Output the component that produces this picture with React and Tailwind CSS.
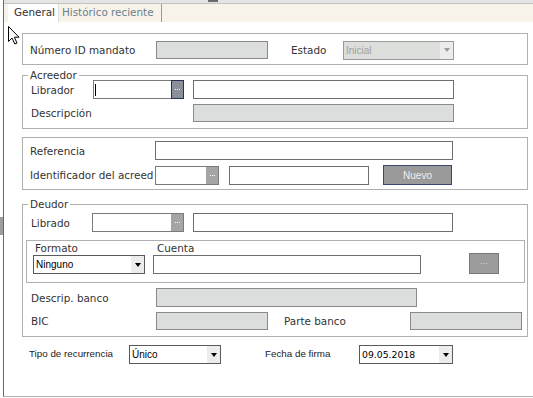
import React from "react";

const Label = ({ className = "", children }) => (
  <span
    className={`shrink-0 overflow-hidden whitespace-nowrap text-[10.4px] leading-[18px] text-[#333] ${className}`}
  >
    {children}
  </span>
);

const TextBox = ({ className = "", children }) => (
  <div className={`h-[19px] shrink-0 border border-[#6e6e6e] bg-white ${className}`}>
    {children}
  </div>
);

const ReadOnly = ({ className = "" }) => (
  <div className={`h-[18px] shrink-0 border border-[#8a8a8a] bg-[#dcdedd] ${className}`} />
);

const Dots = () => (
  <div className="flex gap-[1px]">
    <span className="h-[1px] w-[1px] bg-white" />
    <span className="h-[1px] w-[1px] bg-white" />
    <span className="h-[1px] w-[1px] bg-white" />
  </div>
);

const Lookup = ({ className = "", active = false }) => (
  <div className={`flex h-[19px] shrink-0 border border-[#7a7a7a] bg-white ${className}`}>
    <div className="flex flex-1 items-center pl-[1px]">
      {active && <span className="h-[12px] w-[1px] bg-black" />}
    </div>
    {active ? (
      <div className="-my-px -mr-px flex w-[13px] items-center justify-center border border-[#243458] bg-[#8a8f99]">
        <Dots />
      </div>
    ) : (
      <div className="flex w-[12px] items-center justify-center bg-[#a5a5a5]">
        <Dots />
      </div>
    )}
  </div>
);

const Arrow = ({ muted = false }) => (
  <div className="flex h-full w-[13px] items-center justify-center bg-[#ececec]">
    <div
      className={`h-0 w-0 border-x-[3.5px] border-t-[4px] border-x-transparent ${
        muted ? "border-t-[#9a9a9a]" : "border-t-black"
      }`}
    />
  </div>
);

const Select = ({ className = "", value, muted = false, mono = false }) => (
  <div
    className={`flex h-[19px] shrink-0 items-center border ${
      muted ? "border-[#9a9a9a] bg-[#dcdedc]" : "border-[#5a5a5a] bg-white"
    } ${className}`}
  >
    <span
      className={`flex-1 pl-[2px] leading-[17px] ${
        mono
          ? "font-['DejaVu_Sans',sans-serif] text-[9.3px] text-black"
          : muted
          ? "font-['Liberation_Sans',Arial,sans-serif] text-[10px] text-[#a0a0a0]"
          : "font-['Liberation_Sans',Arial,sans-serif] text-[10px] text-black"
      }`}
    >
      {value}
    </span>
    <Arrow muted={muted} />
  </div>
);

const Group = ({ title, className = "", children }) => (
  <div className={`relative border border-[#b0b0b0] ${className}`}>
    <span className="absolute -top-[8px] left-[5px] bg-white px-[2px] text-[10.4px] leading-[14px] text-[#333]">
      {title}
    </span>
    {children}
  </div>
);

export default function App() {
  return (
    <div className="flex h-[398px] w-[533px] overflow-hidden bg-white font-['DejaVu_Sans',sans-serif]">
      <div className="flex w-[3px] shrink-0 flex-col">
        <div className="h-[217px]" />
        <div className="h-[18px] bg-[#9c9c9c]" />
      </div>

      <div className="flex h-[397px] flex-1 flex-col border-b border-l border-[#b0b0b0] border-l-[#5d6986]">
        <div className="flex h-[4px] shrink-0 border-b border-[#c4c4c4] bg-[#e4e4e4]">
          <div className="ml-[204px] h-[2px] w-[10px] bg-[#6a6a6a]" />
        </div>

        <div className="flex h-[18px] shrink-0 items-stretch bg-[#f7f3e9] pl-[4px]">
          <div className="flex w-[51px] items-center border-r border-[#dcdcdc] bg-white pl-[6px] text-[10.4px] text-[#333]">
            General
          </div>
          <div className="flex w-[103px] items-center border-r border-[#9a9a9a] pl-[3px] text-[10.4px] text-[#6d7d8d]">
            Histórico reciente
          </div>
        </div>

        <div className="flex flex-col pl-[18px] pr-[5px]">
          {/* id + estado */}
          <div className="mt-[11px] flex h-[32px] items-start border border-[#b0b0b0] pl-[7px] pt-[7px]">
            <div className="flex h-[18px] items-center">
              <Label className="w-[126px]">Número ID mandato</Label>
              <ReadOnly className="w-[112px]" />
              <Label className="ml-[23px] w-[52px]">Estado</Label>
              <Select className="h-[18px] w-[111px]" value="Inicial" muted />
            </div>
          </div>

          {/* acreedor */}
          <Group title="Acreedor" className="mt-[10px] pb-[6px] pl-[8px] pt-[4px]">
            <div className="flex items-center">
              <Label className="w-[62px]">Librador</Label>
              <Lookup className="w-[91px]" active />
              <TextBox className="ml-[9px] w-[261px]" />
            </div>
            <div className="mt-[5px] flex items-center">
              <Label className="w-[162px]">Descripción</Label>
              <ReadOnly className="w-[261px]" />
            </div>
          </Group>

          {/* referencia */}
          <div className="mt-[8px] border border-[#b0b0b0] pb-[4px] pl-[7px] pt-[3px]">
            <div className="flex items-center">
              <Label className="w-[125px]">Referencia</Label>
              <TextBox className="h-[18px] w-[298px]" />
            </div>
            <div className="mt-[5px] flex items-center">
              <Label className="w-[125px]">Identificador del acreed</Label>
              <Lookup className="w-[64px]" />
              <TextBox className="ml-[10px] w-[140px]" />
              <button className="ml-[14px] h-[20px] w-[69px] border border-[#3c4670] bg-[#9a9a9a] font-['Liberation_Sans',Arial,sans-serif] text-[10px] text-[#eeeeee]">
                Nuevo
              </button>
            </div>
          </div>

          {/* deudor */}
          <Group title="Deudor" className="mt-[14px] pb-[6px] pl-[8px] pt-[8px]">
            <div className="flex items-center">
              <Label className="w-[61px]">Librado</Label>
              <Lookup className="h-[18px] w-[92px]" />
              <TextBox className="ml-[9px] h-[18px] w-[260px]" />
            </div>

            <div className="-ml-[5px] mr-[2px] mt-[8px] flex items-end border border-[#b0b0b0] pb-[8px] pl-[6px] pt-[1px]">
              <div className="flex w-[112px] flex-col">
                <span className="pl-[2px] text-[10.4px] leading-[13px] text-[#333]">Formato</span>
                <Select className="w-[112px]" value="Ninguno" />
              </div>
              <div className="ml-[8px] flex flex-col">
                <span className="pl-[4px] text-[10.4px] leading-[13px] text-[#333]">Cuenta</span>
                <TextBox className="w-[268px]" />
              </div>
              <button className="ml-[48px] flex h-[21px] w-[30px] items-center justify-center border border-[#7a7a7a] bg-[#9c9c9c] pb-[3px] font-['Liberation_Sans',Arial,sans-serif] text-[9px] text-[#d8d8d8]">
                ...
              </button>
            </div>

            <div className="mt-[5px] flex items-center">
              <Label className="w-[125px]">Descrip. banco</Label>
              <ReadOnly className="h-[19px] w-[261px]" />
            </div>
            <div className="mt-[5px] flex items-center">
              <Label className="w-[125px]">BIC</Label>
              <ReadOnly className="w-[112px]" />
              <Label className="ml-[16px] w-[126px]">Parte banco</Label>
              <ReadOnly className="w-[112px]" />
            </div>
          </Group>

          {/* recurrencia + fecha */}
          <div className="mt-[8px] flex items-center pl-[7px] font-['Liberation_Sans',Arial,sans-serif] text-[9.8px] text-[#222]">
            <span className="w-[100px]">Tipo de recurrencia</span>
            <Select className="w-[92px]" value="Único" />
            <span className="ml-[44px] w-[94px]">Fecha de firma</span>
            <Select className="w-[94px]" value="09.05.2018" mono />
          </div>
        </div>
      </div>

      <svg
        className="absolute left-[8px] top-[26px]"
        width="13"
        height="19"
        viewBox="0 0 13 19"
      >
        <path
          d="M0.5 0.5 L0.5 15.5 L4 12 L6.8 18 L9 17 L6.3 11.2 L11 11.2 Z"
          fill="white"
          stroke="black"
          strokeWidth="1"
        />
      </svg>
    </div>
  );
}
